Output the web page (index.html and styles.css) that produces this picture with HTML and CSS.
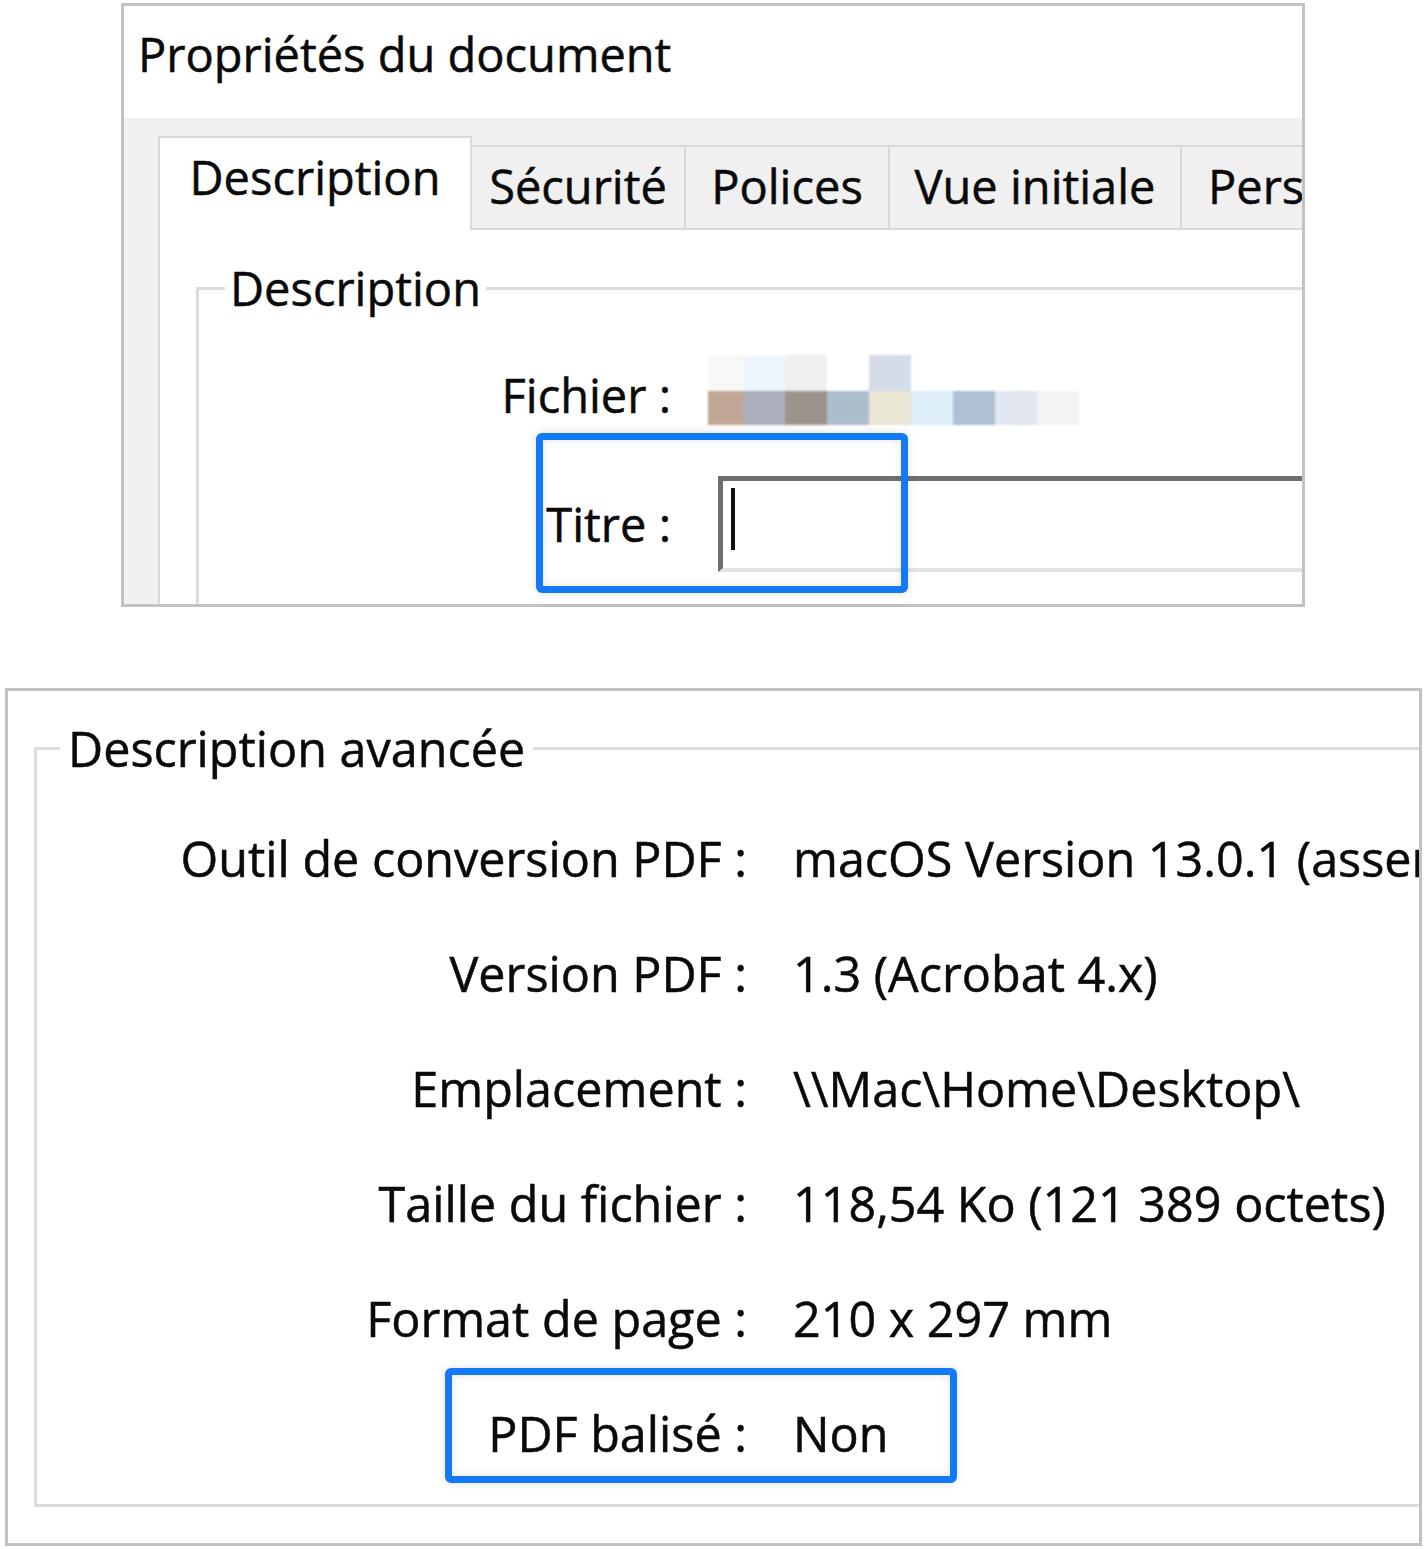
FILE: index.html
```html
<!DOCTYPE html>
<html lang="fr">
<head>
<meta charset="utf-8">
<title>Propriétés du document</title>
<link rel="stylesheet" href="styles.css">
</head>
<body>
<section class="shot shot-top">
  <header class="dlg-title">Propriétés du document</header>
  <div class="tab-area">
    <nav class="tabs">
      <div class="tab tab-active tab-w-desc">Description</div>
      <div class="tab tab-w-sec">Sécurité</div>
      <div class="tab tab-w-pol">Polices</div>
      <div class="tab tab-w-vue">Vue initiale</div>
      <div class="tab tab-last">Personnalisé</div>
    </nav>
    <div class="tab-panel">
      <fieldset class="group group-desc">
        <legend>Description</legend>
        <div class="field field-file">
          <span class="label">Fichier&nbsp;:</span>
          <span class="pixelated" aria-label="nom de fichier masqué"></span>
        </div>
        <div class="field field-title">
          <span class="label">Titre&nbsp;:</span>
          <div class="textbox"><span class="caret"></span></div>
          <div class="highlight highlight-title"></div>
        </div>
      </fieldset>
    </div>
  </div>
</section>

<section class="shot shot-bottom">
  <fieldset class="group group-adv">
    <legend>Description avancée</legend>
    <div class="prop"><span class="prop-label">Outil de conversion PDF&nbsp;:</span><span class="prop-value">macOS Version 13.0.1 (assemblage 22A400) Quartz PDFContext</span></div>
    <div class="prop"><span class="prop-label">Version PDF&nbsp;:</span><span class="prop-value">1.3 (Acrobat 4.x)</span></div>
    <div class="prop"><span class="prop-label">Emplacement&nbsp;:</span><span class="prop-value">\\Mac\Home\Desktop\</span></div>
    <div class="prop"><span class="prop-label">Taille du fichier&nbsp;:</span><span class="prop-value">118,54 Ko (121 389 octets)</span></div>
    <div class="prop"><span class="prop-label">Format de page&nbsp;:</span><span class="prop-value">210 x 297 mm</span></div>
    <div class="prop"><span class="prop-label">PDF balisé&nbsp;:</span><span class="prop-value">Non</span>
      <div class="highlight highlight-tagged"></div>
    </div>
  </fieldset>
</section>
</body>
</html>
```

FILE: styles.css
```css
* { box-sizing: border-box; }

html, body {
  margin: 0;
  padding: 0;
  background: #ffffff;
}

body {
  font-family: "Open Sans", "Noto Sans", sans-serif;
  color: #0a0a0a;
  -webkit-text-stroke: 0.5px #0a0a0a;
  width: 1425px;
  height: 1549px;
  overflow: hidden;
}

/* ---------- screenshot frames ---------- */
.shot {
  overflow: hidden;
  background: #ffffff;
  border: 3px solid #c2c2c2;
}

.shot-top {
  margin: 3px 0 0 121px;
  width: 1184px;
  height: 604px;
}

.shot-bottom {
  margin: 81px 0 0 5px;
  width: 1417px;
}

/* ---------- dialog title ---------- */
.dlg-title {
  height: 112px;
  padding: 15px 0 0 14px;
  font-size: 47px;
  line-height: 66px;
  white-space: nowrap;
}

/* ---------- tabs ---------- */
.tab-area {
  background: #f0f0f0;
  padding: 18px 0 0 34px;
  height: 486px;
}

.tabs {
  display: flex;
  align-items: flex-end;
  font-size: 47px;
  line-height: 66px;
  white-space: nowrap;
}

.tab {
  flex: none;
  text-align: center;
  background: #f0f0f0;
  border-top: 2px solid #d9d9d9;
  border-right: 2px solid #d9d9d9;
  padding: 6px 0 9px;
}

.tab-active {
  position: relative;
  z-index: 1;
  background: #ffffff;
  border-left: 2px solid #d9d9d9;
  padding-bottom: 20px;
  margin-bottom: -2px;
}

.tab-w-desc { width: 314px; }
.tab-w-sec  { width: 214px; }
.tab-w-pol  { width: 204px; }
.tab-w-vue  { width: 292px; }
.tab-last   { text-align: left; padding-left: 26px; padding-right: 24px; }

.tab-panel {
  background: #ffffff;
  border-top: 2px solid #d9d9d9;
  border-left: 2px solid #d9d9d9;
  width: 1300px;
  height: 420px;
}

/* ---------- group boxes ---------- */
.group {
  margin: 0;
  min-width: 0;
  border: 3px solid #dcdcdc;
}

.group legend {
  line-height: 66px;
  white-space: nowrap;
}

.group-desc {
  margin: 25px 0 0 36px;
  padding: 35px 0 0 26px;
  width: 1300px;
  height: 520px;
}

.group-desc legend {
  padding: 0 5px;
  font-size: 47px;
}

/* ---------- fields in the Description group ---------- */
.field {
  display: flex;
}

.label {
  flex: none;
  width: 446px;
  text-align: right;
  font-size: 47px;
  line-height: 66px;
  white-space: nowrap;
}

.field-file {
  height: 72px;
  align-items: flex-start;
}

.field-file .label {
  margin-top: 6px;
}

.pixelated {
  flex: none;
  margin: -1px 0 0 37px;
  width: 371px;
  height: 70px;
  filter: blur(1.2px);
  background:
    linear-gradient(to right,
      #f8f8f8 0 35px, #eef6fd 35px 77px, #efefef 77px 119px, #ffffff 119px 161px,
      #d4dce8 161px 203px, #ffffff 203px 371px) top left / 371px 36px no-repeat,
    linear-gradient(to right,
      #c3a795 0 35px, #aaaebd 35px 77px, #9c938d 77px 119px, #acbdcd 119px 161px,
      #eae6d6 161px 203px, #ddeef9 203px 245px, #aec0d1 245px 287px,
      #e2e6f0 287px 329px, #f3f3f3 329px 371px) bottom left / 371px 34px no-repeat;
}

.field-title {
  position: relative;
  margin-top: 48px;
  height: 96px;
  align-items: center;
}

.textbox {
  flex: none;
  margin-left: 47px;
  width: 800px;
  height: 96px;
  background: #ffffff;
  border-top: 5px solid #6e6e6e;
  border-left: 5px solid #6e6e6e;
  border-bottom: 4px solid #e3e3e3;
  padding: 7px 0 0 8px;
}

.caret {
  display: block;
  width: 4px;
  height: 62px;
  background: #111111;
}

/* ---------- annotation boxes ---------- */
.highlight {
  position: absolute;
  border: 7px solid #1479f6;
  border-radius: 6px;
  box-shadow: 0 0 10px rgba(0, 0, 0, 0.12), inset 0 0 10px rgba(0, 0, 0, 0.10);
  pointer-events: none;
}

.highlight-title {
  left: 311px;
  top: -43px;
  width: 372px;
  height: 160px;
}

.highlight-tagged {
  left: 385px;
  top: -32px;
  width: 512px;
  height: 115px;
}

/* ---------- advanced description ---------- */
.group-adv {
  margin: 24px -60px 36px 26px;
  padding: 44px 0 38px 23px;
}

.group-adv legend {
  padding: 0 8px;
  font-size: 48.5px;
}

.prop {
  position: relative;
  display: flex;
  font-size: 48.5px;
  line-height: 66px;
  white-space: nowrap;
}

.prop + .prop {
  margin-top: 49px;
}

.prop-label {
  flex: none;
  width: 687px;
  text-align: right;
}

.prop-value {
  flex: none;
  margin-left: 46px;
}
```
